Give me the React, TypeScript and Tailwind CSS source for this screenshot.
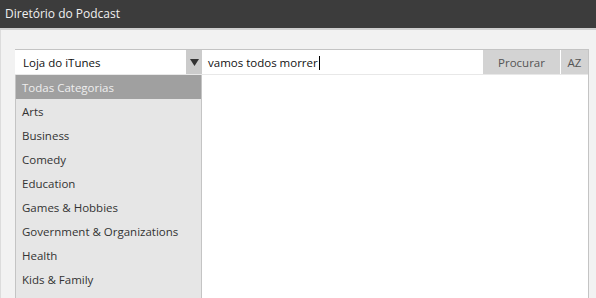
import React from "react";

const cats = [
  "Arts",
  "Business",
  "Comedy",
  "Education",
  "Games & Hobbies",
  "Government & Organizations",
  "Health",
  "Kids & Family",
];

export default function App() {
  return (
    <div
      className="w-[596px] h-[298px] overflow-hidden bg-[#f2f2f2] flex flex-col text-[11.5px]"
      style={{ fontFamily: '"Open Sans", "Noto Sans", sans-serif' }}
    >
      <div className="h-[28px] bg-[#3c3c3c] text-[#f0f0f0] text-[12px] flex items-center pl-[5px] shrink-0">
        Diretório do Podcast
      </div>
      <div className="h-[2px] bg-[#cfcfcf] shrink-0" />
      <div className="flex-1 border-l border-[#dcdcdc] pt-[19px] pl-[14px] pr-[7px] min-h-0">
        <div className="border-t border-r border-[#c4c4c4] h-full flex flex-col bg-white">
          <div className="h-[25px] flex shrink-0 border-b border-[#e8e8e8]">
            <div className="w-[171px] flex items-center pl-[8px] pt-[2px] text-[#111]">Loja do iTunes</div>
            <div className="w-[16px] bg-[#cbcbcb] flex items-center justify-center">
              <svg width="9" height="7" viewBox="0 0 9 7">
                <path d="M0 0 H9 L4.5 7 Z" fill="#333" />
              </svg>
            </div>
            <div className="flex-1 flex items-center pl-[6px] pt-[2px] text-[#111]">
              vamos todos morrer<span className="w-px h-[14px] bg-black ml-px" />
            </div>
            <div className="w-[77px] bg-[#d3d3d3] flex items-center justify-center pt-[2px] text-[#555]">Procurar</div>
            <div className="w-px bg-white" />
            <div className="w-[27px] bg-[#d3d3d3] flex items-center justify-center pt-[2px] text-[#555]">AZ</div>
          </div>
          <div className="flex-1 flex min-h-0">
            <div className="w-[187px] bg-[#e6e6e6] border-l border-r border-[#c4c4c4] flex flex-col overflow-hidden">
              <div className="h-[24px] bg-[#a0a0a0] text-[#eeeeee] flex items-center pl-[6px] pt-[1px] shrink-0">
                Todas Categorias
              </div>
              {cats.map((c) => (
                <div key={c} className="h-[24px] text-[#333] flex items-center pl-[6px] pt-[2px] shrink-0">
                  {c}
                </div>
              ))}
            </div>
            <div className="flex-1 bg-white" />
          </div>
        </div>
      </div>
    </div>
  );
}
